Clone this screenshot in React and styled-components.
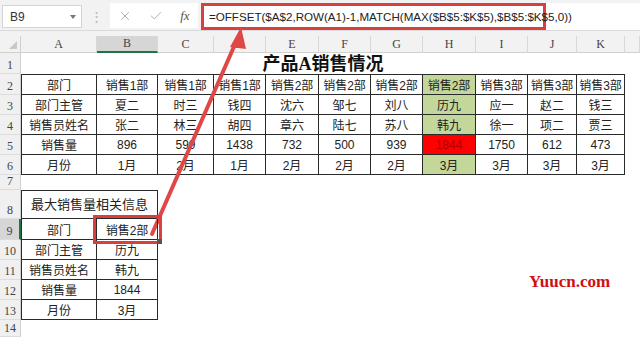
import React from 'react';
import styled, { createGlobalStyle } from 'styled-components';
import { X, Check } from 'lucide-react';

const GlobalStyle = createGlobalStyle`
  html, body {
    margin: 0;
    padding: 0;
    background: #fff;
  }
  body {
    font-family: "Liberation Sans", "Noto Sans CJK SC", sans-serif;
  }
`;

const Page = styled.div`
  position: relative;
  width: 640px;
  height: 337px;
  overflow: hidden;
  background: #fff;
`;

// formula bar
const TopBar = styled.div`
  display: flex;
  align-items: stretch;
  height: 31px;
  padding-top: 3px;
  box-sizing: border-box;
  background: #f2f2f2;
  border-bottom: 1px solid #dadada;
`;

const NameBox = styled.div`
  display: flex;
  align-items: center;
  justify-content: space-between;
  width: 80px;
  margin: 2px 0 2px 2px;
  padding: 0 5px 0 7px;
  box-sizing: border-box;
  background: #fff;
  border: 1px solid #d4d4d4;
  font-size: 12px;
  color: #333;
`;

const Caret = styled.span`
  width: 0;
  height: 0;
  border-left: 3px solid transparent;
  border-right: 3px solid transparent;
  border-top: 4px solid #777;
`;

const Dots = styled.div`
  width: 28px;
  display: flex;
  align-items: center;
  justify-content: center;
  color: #b5b5b5;
  font-size: 13px;
`;

const IconBox = styled.div`
  display: flex;
  align-items: center;
  justify-content: space-around;
  width: 88px;
  margin-bottom: 2px;
  background: #fff;
  color: #a8a8a8;
`;

const Fx = styled.span`
  font-family: "Liberation Serif", serif;
  font-style: italic;
  font-size: 13px;
  color: #555;
`;

const FormulaArea = styled.div`
  flex: 1;
  display: flex;
  margin-left: 3px;
  background: #fff;
`;

const FormulaFrame = styled.div`
  display: flex;
  align-items: center;
  width: 345px;
  padding-left: 5px;
  box-sizing: border-box;
  border: 3px solid #d8403f;
  font-size: 11.6px;
  color: #222;
  white-space: nowrap;
`;

const Gap = styled.div`
  height: 5px;
  background: #f2f2f2;
`;

// sheet grid
const Sheet = styled.div`
  display: grid;
  grid-template-columns: 21px 76px 61px 56px 52px 53px 52px 52px 53px 52px 49px 48px 1fr;
  grid-template-rows: 17px 21px 21px 20px 20px 20px 20px 15px 29px 21px 20px 20px 20px 20px 1fr;
  height: 301px;
`;

const Corner = styled.div`
  position: relative;
  background: #f2f2f2;
  border-bottom: 1px solid #d0d0d0;
  border-right: 1px solid #d0d0d0;

  &::after {
    content: '';
    position: absolute;
    right: 3px;
    bottom: 3px;
    border-left: 8px solid transparent;
    border-bottom: 8px solid #c8c8c8;
  }
`;

const ColHead = styled.div`
  display: flex;
  align-items: center;
  justify-content: center;
  box-sizing: border-box;
  background: ${(p) => (p.$active ? '#d6d6d6' : '#f2f2f2')};
  border-right: 1px solid #d8d8d8;
  border-bottom: ${(p) => (p.$active ? '2px solid #217346' : '1px solid #d0d0d0')};
  font-family: "Liberation Serif", serif;
  font-size: 12px;
  color: #444;
`;

const RowHead = styled.div`
  display: flex;
  align-items: flex-end;
  justify-content: center;
  box-sizing: border-box;
  padding-bottom: 1px;
  background: ${(p) => (p.$active ? '#d6d6d6' : '#f0f0f0')};
  border-bottom: 1px solid #dcdcdc;
  border-right: ${(p) => (p.$active ? '2px solid #217346' : '1px solid #d0d0d0')};
  font-family: "Liberation Serif", serif;
  font-size: 12px;
  line-height: 13px;
  color: #444;
`;

const Cell = styled.div`
  position: relative;
  display: flex;
  align-items: center;
  justify-content: center;
  box-sizing: border-box;
  min-width: 0;
  white-space: nowrap;
  font-family: "Liberation Sans", "Noto Sans CJK SC", sans-serif;
  font-size: 12px;
  color: ${(p) => p.$color || '#222'};
  background: ${(p) => p.$bg || 'transparent'};
  border-right: ${(p) => (p.$box ? '1px solid #2a2a2a' : 'none')};
  border-bottom: ${(p) => (p.$box ? '1px solid #2a2a2a' : 'none')};
  border-top: ${(p) => (p.$top ? '1px solid #2a2a2a' : 'none')};
  border-left: ${(p) => (p.$left ? '1px solid #2a2a2a' : 'none')};
  ${(p) => p.$span && `grid-column: span ${p.$span};`}
  ${(p) => p.$marked && `
    outline: 3px solid #d8403f;
    outline-offset: 1px;
    z-index: 2;
  `}
`;

const Title = styled(Cell)`
  align-items: flex-end;
  padding-bottom: 0;
  font-size: 18px;
  line-height: 20px;
  font-weight: 700;
  color: #111;
  font-family: "Liberation Serif", "Noto Sans CJK SC", serif;
`;

const Caption = styled(Cell)`
  align-items: flex-end;
  padding-bottom: 5px;
  font-size: 13px;
`;

const Handle = styled.span`
  position: absolute;
  right: -5px;
  bottom: -5px;
  width: 5px;
  height: 5px;
  background: #555;
`;

const Overlay = styled.svg`
  position: absolute;
  left: 0;
  top: 0;
  pointer-events: none;
`;

const Watermark = styled.div`
  position: absolute;
  left: 529px;
  top: 272px;
  font-family: "Liberation Serif", serif;
  font-weight: 700;
  font-size: 17px;
  color: #d01010;
`;

const letters = ['A', 'B', 'C', 'D', 'E', 'F', 'G', 'H', 'I', 'J', 'K'];

const labels = ['部门', '部门主管', '销售员姓名', '销售量', '月份'];
const data = [
  ['销售1部', '销售1部', '销售1部', '销售2部', '销售2部', '销售2部', '销售2部', '销售3部', '销售3部', '销售3部'],
  ['夏二', '时三', '钱四', '沈六', '邹七', '刘八', '历九', '应一', '赵二', '钱三'],
  ['张二', '林三', '胡四', '章六', '陆七', '苏八', '韩九', '徐一', '项二', '贾三'],
  ['896', '599', '1438', '732', '500', '939', '1844', '1750', '612', '473'],
  ['1月', '2月', '1月', '2月', '2月', '2月', '3月', '3月', '3月', '3月'],
];
const result = ['销售2部', '历九', '韩九', '1844', '3月'];

function cellStyle(r, c) {
  if (c !== 6) return {};
  if (r === 3) return { $bg: '#ff0000', $color: '#b00000' };
  return { $bg: '#c4d79b' };
}

function App() {
  return (
    <Page>
      <GlobalStyle />
      <TopBar>
        <NameBox>
          B9
          <Caret />
        </NameBox>
        <Dots>⋮</Dots>
        <IconBox>
          <X size={14} strokeWidth={1.6} />
          <Check size={14} strokeWidth={1.6} />
          <Fx>fx</Fx>
        </IconBox>
        <FormulaArea>
          <FormulaFrame>=OFFSET($A$2,ROW(A1)-1,MATCH(MAX($B$5:$K$5),$B$5:$K$5,0))</FormulaFrame>
        </FormulaArea>
      </TopBar>
      <Gap />
      <Sheet>
        <Corner />
        {letters.map((l) => (
          <ColHead key={l} $active={l === 'B'}>{l}</ColHead>
        ))}
        <ColHead />

        <RowHead>1</RowHead>
        <Title $span={11}>产品A销售情况</Title>
        <Cell />

        {data.map((row, r) => (
          <React.Fragment key={r}>
            <RowHead>{r + 2}</RowHead>
            <Cell $box $left $top={r === 0}>{labels[r]}</Cell>
            {row.map((v, c) => (
              <Cell key={c} $box $top={r === 0} {...cellStyle(r, c)}>{v}</Cell>
            ))}
            <Cell />
          </React.Fragment>
        ))}

        <RowHead>7</RowHead>
        <Cell $span={12} />

        <RowHead>8</RowHead>
        <Caption $box $left $top $span={2}>最大销售量相关信息</Caption>
        <Cell $span={10} />

        {labels.map((label, i) => (
          <React.Fragment key={label}>
            <RowHead $active={i === 0}>{i + 9}</RowHead>
            <Cell $box $left>{label}</Cell>
            <Cell $box $marked={i === 0}>
              {result[i]}
              {i === 0 && <Handle />}
            </Cell>
            <Cell $span={10} />
          </React.Fragment>
        ))}

        <RowHead>14</RowHead>
        <Cell $span={12} />
      </Sheet>

      <Overlay width="640" height="337" viewBox="0 0 640 337">
        <line x1="152" y1="234" x2="236" y2="42" stroke="#e04848" strokeWidth="4" strokeLinecap="round" />
        <polygon points="241,27 230,47 246,49" fill="#e04848" />
      </Overlay>
      <Watermark>Yuucn.com</Watermark>
    </Page>
  );
}

export default App;
